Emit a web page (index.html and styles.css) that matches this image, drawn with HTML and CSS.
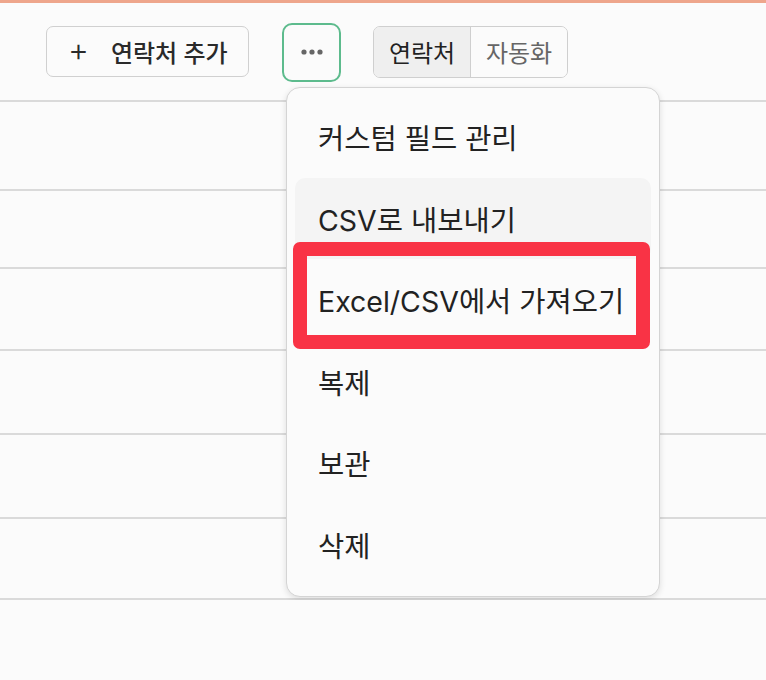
FILE: index.html
```html
<!DOCTYPE html>
<html lang="ko">
<head>
<meta charset="utf-8">
<title>연락처</title>
<link rel="stylesheet" href="styles.css">
</head>
<body>
<div class="topline"></div>
<div class="page">
  <div class="toolbar">
    <button class="btn add-btn"><span class="plus">+</span><span>연락처 추가</span></button>
    <div class="more-wrap">
      <button class="btn more-btn" aria-label="더보기">
        <svg width="22" height="6" viewBox="0 0 22 6"><circle cx="3" cy="3" r="2.6" fill="#666"/><circle cx="11" cy="3" r="2.6" fill="#666"/><circle cx="19" cy="3" r="2.6" fill="#666"/></svg>
      </button>
    </div>
    <div class="segmented">
      <button class="seg active">연락처</button>
      <button class="seg">자동화</button>
    </div>
  </div>
  <div class="table">
    <div class="row r1"></div>
    <div class="row r2"></div>
    <div class="row r3"></div>
    <div class="row r4"></div>
    <div class="row r5"></div>
    <div class="row r6"></div>
  </div>
  <div class="menu">
    <div class="item">커스텀 필드 관리</div>
    <div class="item hover">CSV로 내보내기</div>
    <div class="item">Excel/CSV에서 가져오기</div>
    <div class="item">복제</div>
    <div class="item">보관</div>
    <div class="item">삭제</div>
    <div class="highlight"></div>
  </div>
</div>
</body>
</html>
```
FILE: styles.css
```css
* { box-sizing: border-box; }
html, body {
  margin: 0;
  padding: 0;
  background: #fbfbfb;
  font-family: "Inter", "Noto Sans CJK KR", "Noto Sans", sans-serif;
  color: #222;
}
.topline {
  height: 3px;
  background: #eea68c;
}
.page {
  position: relative;
}
.toolbar {
  height: 97px;
  display: flex;
  align-items: center;
  padding-left: 46px;
}
.btn {
  font-family: inherit;
  background: #fbfbfb;
  cursor: pointer;
}
.add-btn {
  width: 203px;
  height: 51px;
  border: 1.5px solid #d0d0d0;
  border-radius: 7px;
  display: flex;
  align-items: center;
  padding: 0 0 0 21px;
  font-size: 24px;
  font-weight: 500;
  color: #2a2a2a;
  gap: 22px;
}
.plus {
  font-size: 32px;
  font-weight: 300;
  line-height: 1;
  margin-top: -3px;
}
.more-wrap {
  margin-left: 33px;
  margin-top: 1px;
}
.more-btn {
  width: 59px;
  height: 59px;
  border: 2px solid #5dbb8d;
  border-radius: 10px;
  display: flex;
  align-items: center;
  justify-content: center;
  padding: 0;
}
.segmented {
  margin-left: 32px;
  display: flex;
  height: 52px;
  border: 1.5px solid #cfcfcf;
  border-radius: 7px;
  overflow: hidden;
}
.seg {
  font-family: inherit;
  font-size: 24px;
  border: 0;
  background: #fbfbfb;
  color: #666;
  padding: 0;
  height: 100%;
}
.seg.active {
  width: 97px;
  background: #efefef;
  color: #222;
  border-right: 1.5px solid #cfcfcf;
}
.seg:not(.active) {
  width: 96px;
}
.table {
  display: grid;
  grid-template-rows: 89px 78px 82px 84px 84px 83px;
}
.row {
  border-top: 2px solid #dadada;
}
.row.r6 {
  border-bottom: 2px solid #dadada;
}
.menu {
  position: absolute;
  left: 286px;
  top: 84px;
  width: 374px;
  background: #fbfbfb;
  border: 1.5px solid #d4d4d4;
  border-radius: 14px;
  box-shadow: 0 2px 6px rgba(0, 0, 0, 0.12);
  padding: 8px 8px 11px;
}
.item {
  height: 81.5px;
  display: flex;
  align-items: center;
  padding-left: 23px;
  font-size: 28.5px;
  color: #222;
  border-radius: 10px;
}
.item.hover {
  background: #f4f4f4;
}
.highlight {
  position: absolute;
  left: 6px;
  top: 154px;
  width: 357px;
  height: 107px;
  border: 14px solid #f93345;
  border-radius: 7px;
}
```
